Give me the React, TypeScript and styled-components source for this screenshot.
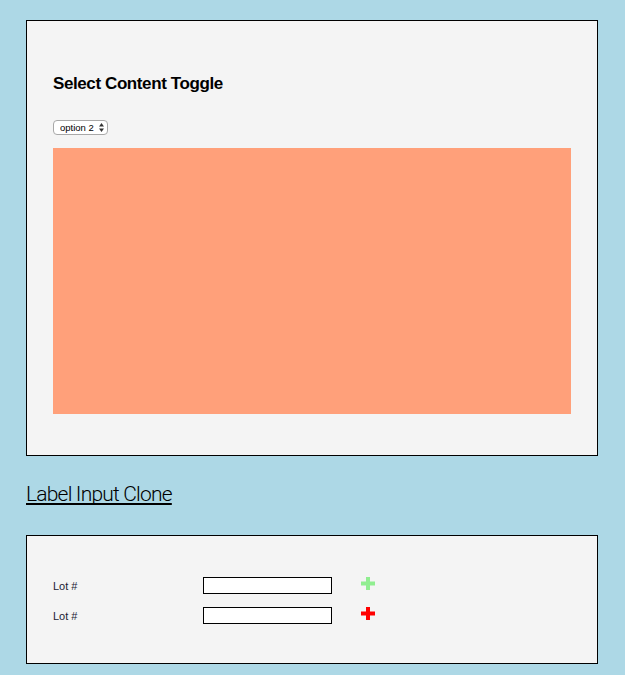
import React from "react";
import styled, { createGlobalStyle } from "styled-components";

const GlobalStyle = createGlobalStyle`
  html, body {
    margin: 0;
    padding: 0;
    background: #add8e6;
  }
  body {
    font-family: "Liberation Sans", Arial, sans-serif;
  }
`;

const Page = styled.div`
  padding: 20px 27px 11px 26px;
`;

const Panel = styled.section<{ $pad: string }>`
  border: 1px solid #000;
  background: #f4f4f4;
  padding: ${(p) => p.$pad};
`;

const Heading = styled.h3`
  margin: 0 0 25px;
  font-family: "Liberation Sans", Arial, sans-serif;
  font-weight: 700;
  font-size: 17px;
  letter-spacing: -0.4px;
  line-height: 22px;
  color: #000;
`;

const SelectWrap = styled.div`
  position: relative;
  width: 55px;
  height: 15px;
  margin-bottom: 13px;
`;

const Select = styled.select`
  appearance: none;
  -webkit-appearance: none;
  box-sizing: border-box;
  display: block;
  width: 55px;
  height: 15px;
  margin: 0;
  padding: 0 0 0 6px;
  border: 1px solid #a8a8a8;
  border-radius: 4px;
  background: #fff;
  font-family: "Liberation Sans", Arial, sans-serif;
  font-size: 9.5px;
  line-height: 13px;
  color: #000;
  outline: none;
`;

const SelectArrows = styled.svg`
  position: absolute;
  right: 4px;
  top: 3px;
  pointer-events: none;
`;

const ColorBlock = styled.div`
  height: 266px;
  background: #ffa07a;
`;

const CloneTitle = styled.h2`
  margin: 25px 0 28px;
  font-family: Roboto, "Liberation Sans", sans-serif;
  font-weight: 300;
  font-size: 21px;
  letter-spacing: -0.8px;
  line-height: 26px;
  color: #000;
  text-decoration: underline;
  text-decoration-thickness: 2px;
  text-underline-offset: 2px;
  text-decoration-skip-ink: none;
`;

const Row = styled.div`
  display: flex;
  align-items: center;
  height: 17px;
  & + & {
    margin-top: 13px;
  }
`;

const Label = styled.label`
  width: 150px;
  font-family: "Liberation Sans", Arial, sans-serif;
  font-size: 11px;
  color: #1a1a33;
`;

const TextInput = styled.input`
  box-sizing: border-box;
  width: 129px;
  height: 17px;
  margin: 0;
  padding: 0 2px;
  border: 1px solid #000;
  background: #fff;
  outline: none;
`;

const PlusButton = styled.button`
  display: flex;
  margin: 0 0 4px 29px;
  padding: 0;
  border: 0;
  background: none;
  cursor: pointer;
`;

function PlusIcon({ color }: { color: string }) {
  return (
    <svg width="14" height="13" viewBox="0 0 14 13">
      <rect x="5" y="0" width="4" height="13" fill={color} />
      <rect x="0" y="4.5" width="14" height="4" fill={color} />
    </svg>
  );
}

export default function App() {
  const rows = [
    { id: 1, color: "#90ee90" },
    { id: 2, color: "#ff0000" },
  ];
  return (
    <>
      <GlobalStyle />
      <Page>
        <Panel $pad="52px 26px 41px 26px">
          <Heading>Select Content Toggle</Heading>
          <SelectWrap>
            <Select defaultValue="option 2">
              <option>option 1</option>
              <option>option 2</option>
              <option>option 3</option>
            </Select>
            <SelectArrows width="5" height="9" viewBox="0 0 5 9">
              <path d="M2.5 0 L5 3.5 L0 3.5 Z" fill="#333" />
              <path d="M2.5 9 L5 5.5 L0 5.5 Z" fill="#333" />
            </SelectArrows>
          </SelectWrap>
          <ColorBlock />
        </Panel>
        <CloneTitle>Label Input Clone</CloneTitle>
        <Panel $pad="41px 26px 39px 26px">
          {rows.map((r) => (
            <Row key={r.id}>
              <Label>Lot #</Label>
              <TextInput type="text" />
              <PlusButton aria-label="add">
                <PlusIcon color={r.color} />
              </PlusButton>
            </Row>
          ))}
        </Panel>
      </Page>
    </>
  );
}
